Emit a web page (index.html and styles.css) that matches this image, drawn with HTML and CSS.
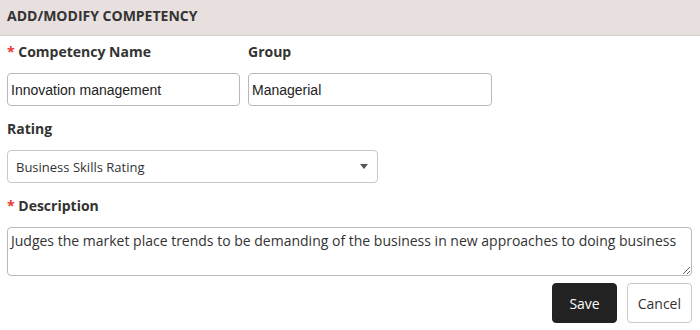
FILE: index.html
```html
<!DOCTYPE html>
<html lang="en">

<head>
  <meta charset="UTF-8" />
  <title>Add/Modify Competency</title>
  <link rel="stylesheet" href="styles.css">
</head>

<body>
  <div class="panel">
    <div class="panel-header">ADD/MODIFY COMPETENCY</div>
    <form class="panel-body">
      <div class="row">
        <div class="field field-name">
          <label><span class="req">*</span> Competency Name</label>
          <input type="text" value="Innovation management" />
        </div>
        <div class="field field-group">
          <label>Group</label>
          <input type="text" value="Managerial" />
        </div>
      </div>

      <div class="field field-rating">
        <label>Rating</label>
        <div class="select">
          <span>Business Skills Rating</span>
          <span class="caret"></span>
        </div>
      </div>

      <div class="field field-desc">
        <label><span class="req">*</span> Description</label>
        <textarea>Judges the market place trends to be demanding of the business in new approaches to doing business</textarea>
      </div>

      <div class="actions">
        <button type="button" class="btn btn-primary">Save</button>
        <button type="button" class="btn">Cancel</button>
      </div>
    </form>
  </div>
</body>

</html>
```

FILE: styles.css
```css
* {
  box-sizing: border-box;
}

body {
  margin: 0;
  background: #fff;
  font-family: 'Open Sans', sans-serif;
  color: #333;
}

.panel-header {
  height: 36px;
  background: #e8dfdf;
  border-bottom: 1px solid #d4d0d0;
  padding: 0 7px;
  font-size: 14px;
  font-weight: bold;
  line-height: 31px;
  color: #333;
}

.panel-body {
  padding: 6px 8px 0 7px;
}

.row {
  display: flex;
  gap: 8px;
}

.field {
  margin-bottom: 13px;
}

.field label {
  display: block;
  font-size: 14px;
  font-weight: bold;
  line-height: 20px;
  margin-bottom: 11px;
}

.req {
  color: #e53935;
}

.field-name {
  width: 233px;
}

.field-group {
  width: 244px;
}

input {
  display: block;
  width: 100%;
  height: 33px;
  border: 1px solid #b8b8b8;
  border-radius: 4px;
  padding: 0 3px;
  font-family: 'Liberation Sans', Arial, sans-serif;
  font-size: 14px;
  color: #222;
}

.field-rating {
  width: 371px;
}

.select {
  display: flex;
  align-items: center;
  justify-content: space-between;
  height: 33px;
  border: 1px solid #c8c8c8;
  border-radius: 4px;
  padding: 0 9px 0 8px;
  font-size: 13px;
  color: #333;
}

.caret {
  width: 0;
  height: 0;
  border-left: 4px solid transparent;
  border-right: 4px solid transparent;
  border-top: 5px solid #555;
}

textarea {
  display: block;
  width: 100%;
  height: 49px;
  border: 1px solid #b8b8b8;
  border-radius: 4px;
  padding: 3px 3px;
  font-family: 'Open Sans', sans-serif;
  font-size: 14px;
  line-height: 20px;
  color: #333;
}

.field-desc {
  margin-bottom: 0;
}

.actions {
  display: flex;
  justify-content: flex-end;
  gap: 10px;
  margin-top: 7px;
}

.btn {
  height: 40px;
  border: 1px solid #c8c8c8;
  border-radius: 4px;
  background: #fff;
  color: #333;
  font-family: 'Open Sans', sans-serif;
  font-size: 14px;
  padding: 0 10px;
}

.btn-primary {
  background: #222;
  border-color: #222;
  color: #fff;
  padding: 0 16px;
}
```
